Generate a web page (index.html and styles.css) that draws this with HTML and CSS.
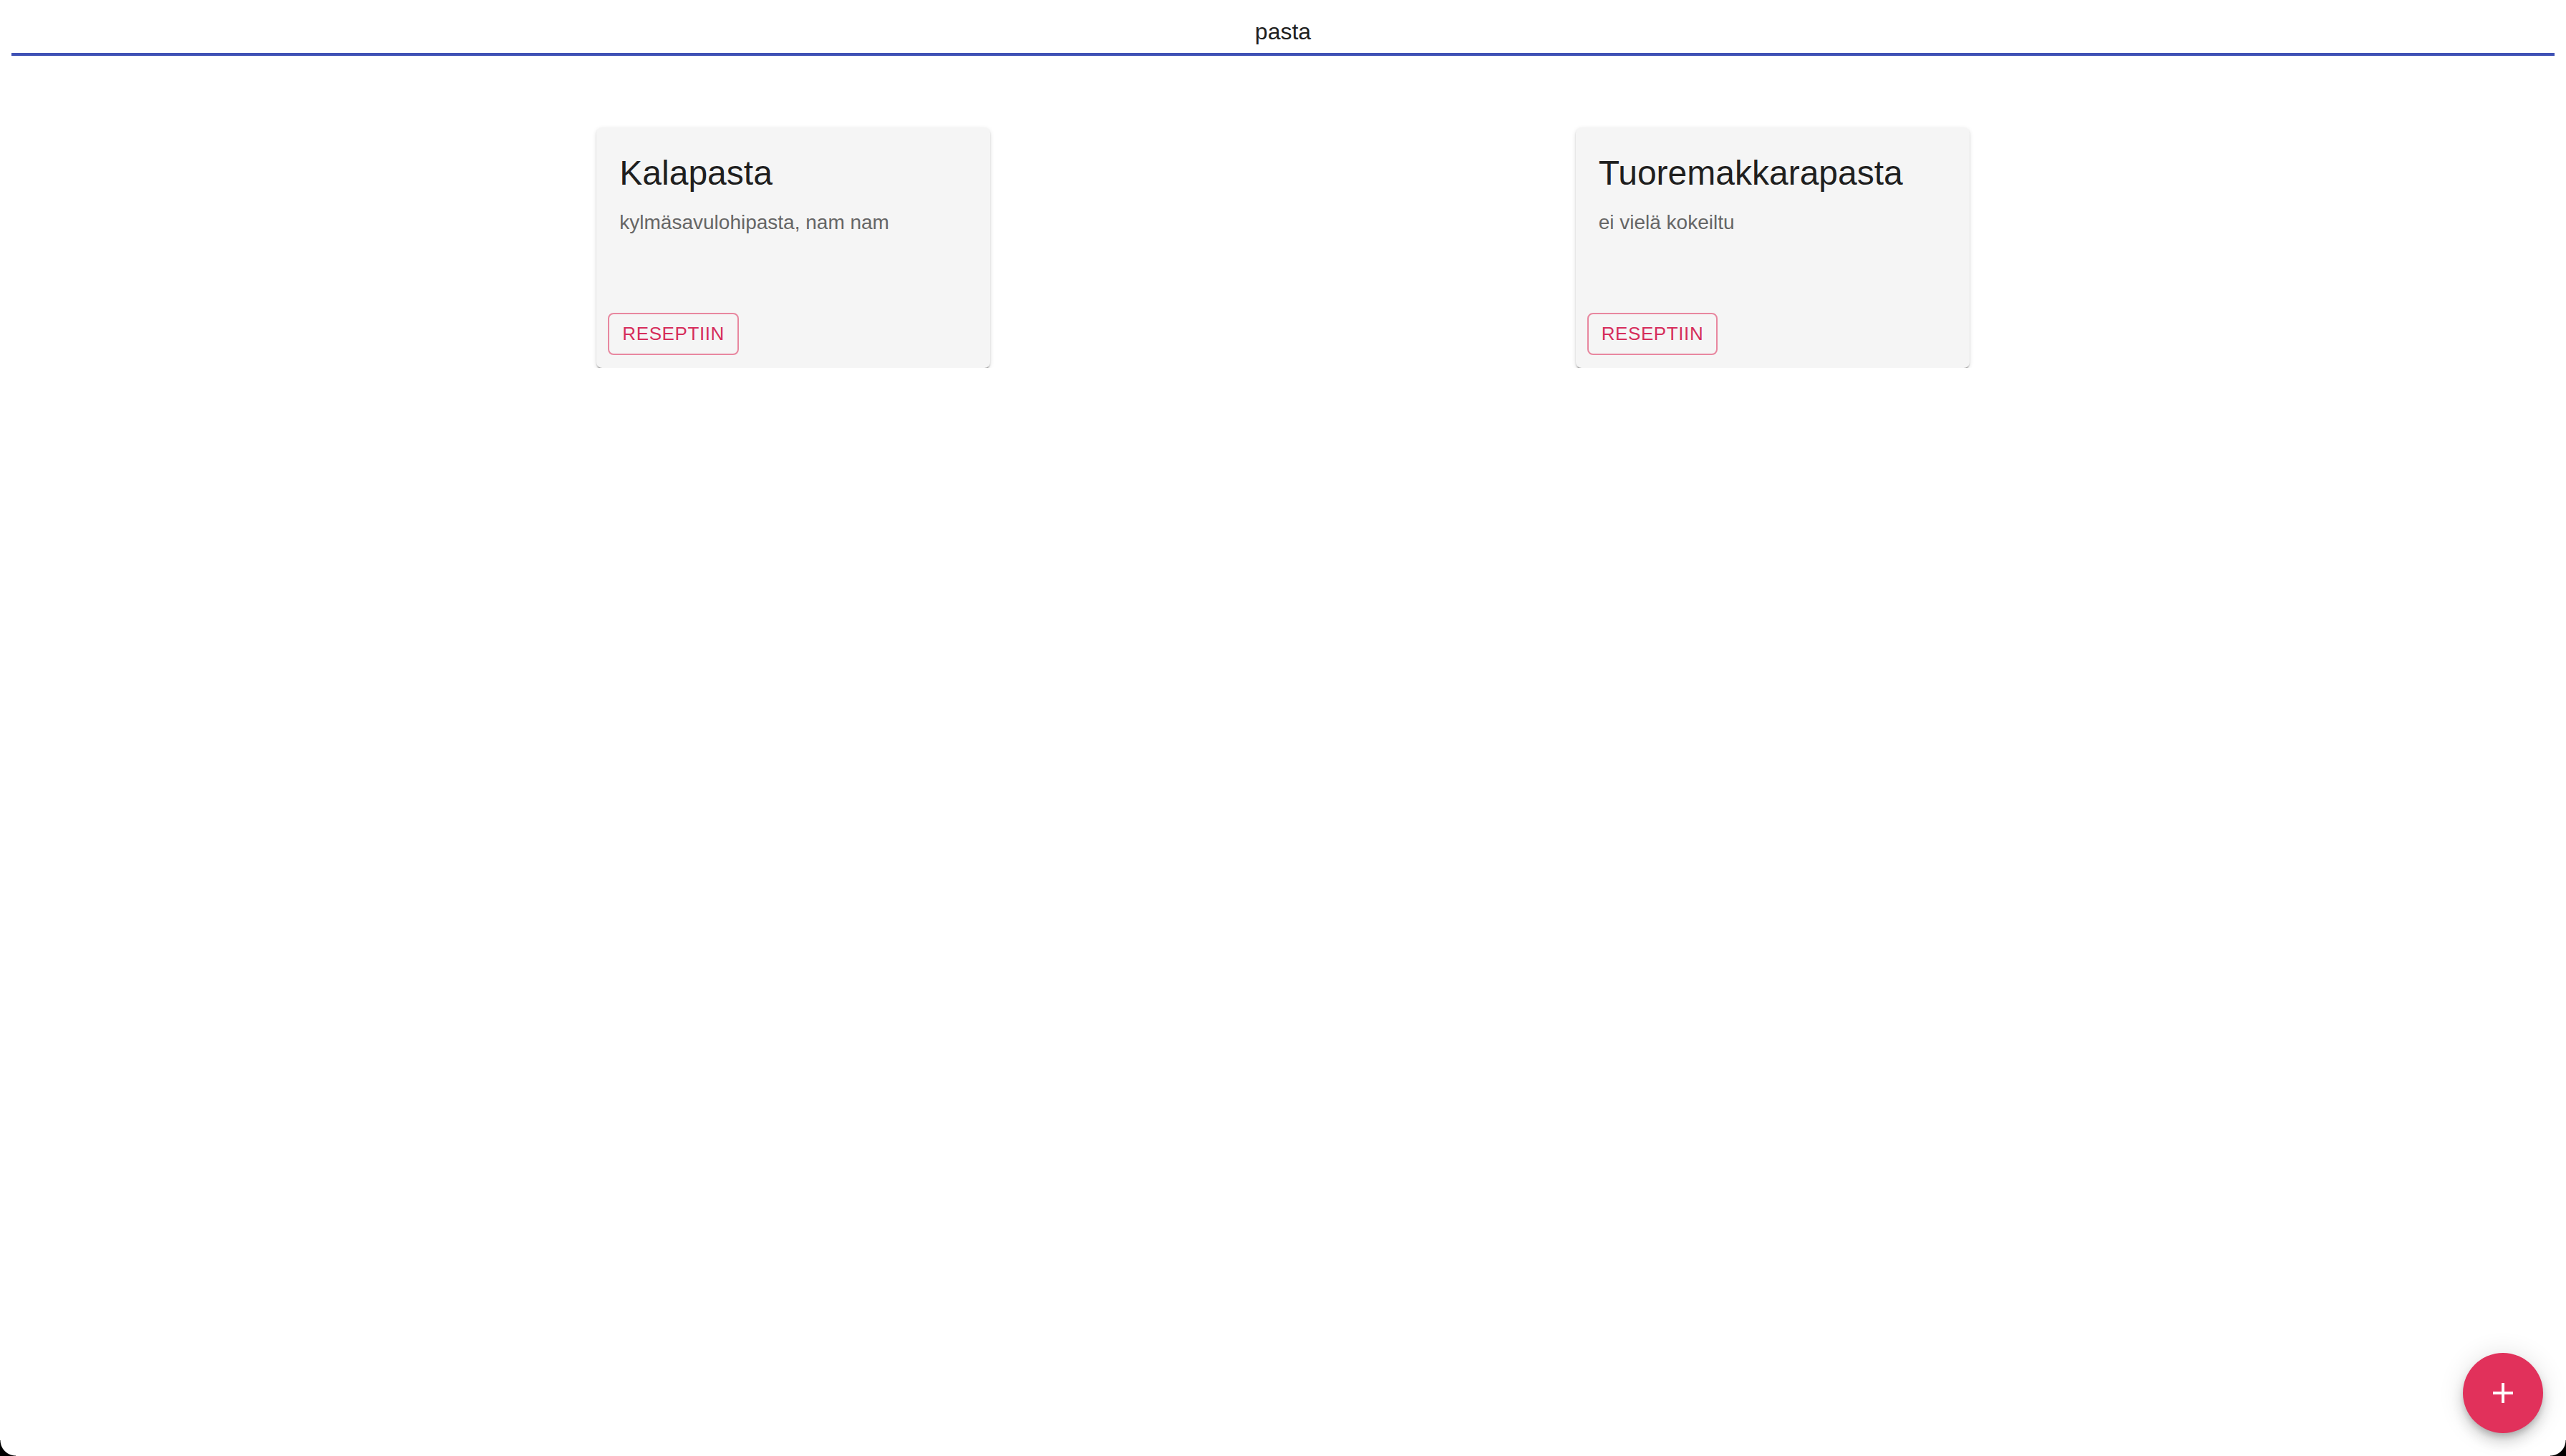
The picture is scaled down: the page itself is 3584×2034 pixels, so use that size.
FILE: index.html
```html
<!DOCTYPE html>
<html lang="fi">
<head>
<meta charset="utf-8">
<title>pasta</title>
<link rel="stylesheet" href="styles.css">
</head>
<body>
<div class="page">
  <div class="search"><span class="search-value">pasta</span></div>
  <div class="cards">
    <div class="card">
      <div class="card-content">
        <h5 class="card-title">Kalapasta</h5>
        <p class="card-text">kylmäsavulohipasta, nam nam</p>
      </div>
      <div class="card-actions">
        <button class="btn-outlined">RESEPTIIN</button>
      </div>
    </div>
    <div class="card">
      <div class="card-content">
        <h5 class="card-title">Tuoremakkarapasta</h5>
        <p class="card-text">ei vielä kokeiltu</p>
      </div>
      <div class="card-actions">
        <button class="btn-outlined">RESEPTIIN</button>
      </div>
    </div>
  </div>
</div>
<button class="fab" aria-label="add">
  <svg class="fab-icon" viewBox="0 0 24 24"><path d="M19 13h-6v6h-2v-6H5v-2h6V5h2v6h6v2z"/></svg>
</button>
<div class="corner corner-left"></div>
<div class="corner corner-right"></div>
</body>
</html>
```
FILE: styles.css
```css
html, body {
  margin: 0;
  padding: 0;
  background: #ffffff;
  font-family: "Liberation Sans", Arial, Helvetica, sans-serif;
}

.page {
  padding: 14px 16px 0;
}

.search {
  text-align: center;
  font-size: 32px;
  line-height: 38px;
  padding: 11px 0 11px;
  color: #1e1e1e;
  border-bottom: 4px solid #3f51b5;
}

.cards {
  display: flex;
  justify-content: space-evenly;
  margin-top: 100px;
}

.card {
  width: 550px;
  height: 336px;
  box-sizing: border-box;
  background: #f5f5f5;
  border-radius: 8px;
  box-shadow: 0 4px 2px -2px rgba(0,0,0,0.28), 0 2px 2px 0 rgba(0,0,0,0.16), 0 2px 6px 0 rgba(0,0,0,0.12);
  display: flex;
  flex-direction: column;
}

.card-content {
  flex: 1;
  padding: 32px 32px 0;
}

.card-title {
  margin: 0 0 17px;
  font-size: 48px;
  line-height: 64px;
  font-weight: 400;
  color: #1f1f1f;
}

.card-text {
  margin: 0;
  font-size: 28px;
  line-height: 40px;
  color: #666666;
}

.card-actions {
  padding: 16px 16px 18px;
  display: flex;
}

.btn-outlined {
  font-family: "Liberation Sans", Arial, Helvetica, sans-serif;
  font-size: 26px;
  letter-spacing: 0.6px;
  line-height: 45px;
  height: 59px;
  padding: 0 18px;
  box-sizing: border-box;
  background: transparent;
  color: #d62d5b;
  border: 2px solid #e8879f;
  border-radius: 8px;
  cursor: pointer;
}

.fab {
  position: fixed;
  right: 32px;
  bottom: 32px;
  width: 112px;
  height: 112px;
  border-radius: 50%;
  border: none;
  padding: 0;
  background: #e1315b;
  box-shadow: 0 6px 10px -2px rgba(0,0,0,0.2), 0 12px 20px 0 rgba(0,0,0,0.14), 0 2px 36px 0 rgba(0,0,0,0.12);
  display: flex;
  align-items: center;
  justify-content: center;
  cursor: pointer;
}

.fab-icon {
  width: 48px;
  height: 48px;
  fill: #ffffff;
}

.corner {
  position: fixed;
  bottom: 0;
  width: 22px;
  height: 22px;
  pointer-events: none;
}

.corner-left {
  left: 0;
  background: radial-gradient(circle at 22px 0, transparent 21px, #000 22px);
}

.corner-right {
  right: 0;
  background: radial-gradient(circle at 0 0, transparent 21px, #000 22px);
}
```
